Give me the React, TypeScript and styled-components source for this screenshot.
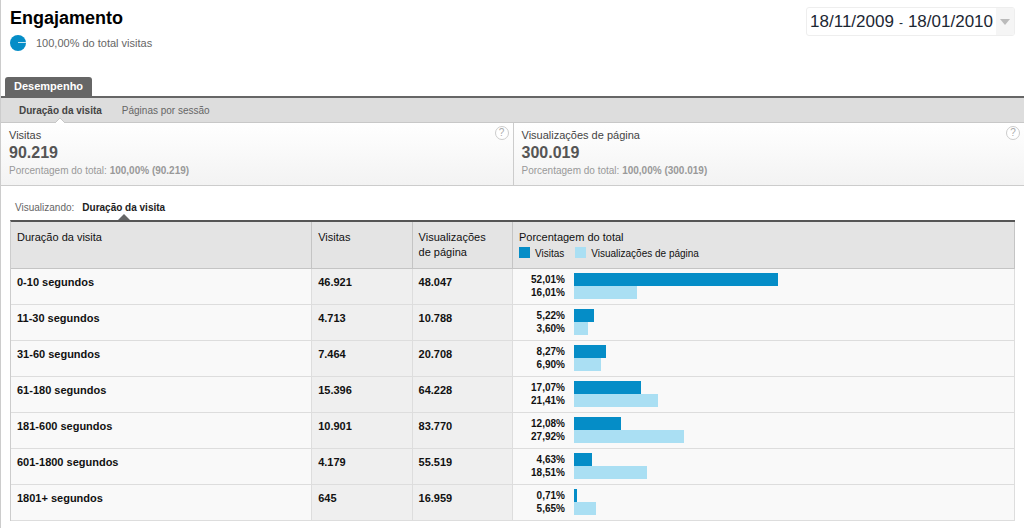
import React from "react";
import styled, { createGlobalStyle } from "styled-components";

const GlobalStyle = createGlobalStyle`
  *, *::before, *::after { box-sizing: border-box; }
  body { margin: 0; background: #fff; color: #111; font: 11px/14px "Liberation Sans", Arial, sans-serif; }
  h1, p, dl, dd { margin: 0; }
  button { font: inherit; color: inherit; cursor: pointer; }
  a { color: inherit; text-decoration: none; }
`;

const Page = styled.div`
  min-height: 100vh;
  border-left: 1px solid #ccc;
`;

const Header = styled.header`
  display: flex;
  justify-content: space-between;
  align-items: flex-start;
  padding: 7px 9px 25px;
`;

const Title = styled.h1`
  font-size: 18px;
  line-height: 22px;
  color: #000;
`;

const Share = styled.p`
  display: flex;
  align-items: center;
  gap: 10px;
  margin-top: 5px;
  line-height: 18px;
  color: #666;
`;

const DateButton = styled.button`
  display: flex;
  align-items: stretch;
  height: 29px;
  padding: 0;
  overflow: hidden;
  border: 1px solid #eee;
  border-radius: 3px;
  background: #fff;
  color: #1c2733;
  font-size: 17px;
  line-height: 27px;
`;

const DateRange = styled.span`
  display: flex;
  gap: 5px;
  padding: 0 3px;
`;

const Dash = styled.span`
  font-size: 12px;
  line-height: 30px;
`;

const Caret = styled.span`
  display: flex;
  align-items: center;
  justify-content: center;
  width: 18px;
  background: #f5f5f5;
`;

const TabBar = styled.nav`
  display: flex;
  padding-left: 4px;
  border-bottom: 2px solid #666;
`;

const Tab = styled.button`
  padding: 0 9px;
  border: 0;
  border-radius: 3px 3px 0 0;
  background: #666;
  color: #fff;
  font-weight: bold;
  line-height: 19px;
`;

const SubNav = styled.nav`
  display: flex;
  gap: 20px;
  padding: 1px 0 0 18px;
  border-bottom: 1px solid #c8c8c8;
  background: #ddd;
  font-size: 10px;
  line-height: 23px;
  color: #666;
`;

const SubLink = styled.a<{ $active?: boolean }>`
  position: relative;
  font-weight: ${(p) => (p.$active ? "bold" : "normal")};
  color: ${(p) => (p.$active ? "#444" : "#666")};
`;

const Notch = styled.svg`
  position: absolute;
  left: 50%;
  bottom: -1px;
  transform: translateX(-50%);
`;

const Metrics = styled.dl`
  display: grid;
  grid-template-columns: 1fr 1fr;
  border-bottom: 1px solid #ccc;
  background: linear-gradient(#fff, #f3f3f3);
`;

const Metric = styled.div`
  display: flex;
  justify-content: space-between;
  align-items: flex-start;
  padding: 3px 4px 6px 8px;

  & + & { border-left: 1px solid #ccc; }
`;

const MetricName = styled.dt`
  line-height: 18px;
  color: #444;
`;

const MetricValue = styled.dd`
  font-size: 16px;
  font-weight: bold;
  line-height: 18px;
  color: #555;
`;

const MetricShare = styled.dd`
  font-size: 10px;
  line-height: 17px;
  color: #999;
`;

const HelpButton = styled.button`
  width: 14px;
  height: 14px;
  padding: 0;
  border: 1px solid #ccc;
  border-radius: 50%;
  background: #fff;
  color: #aaa;
  font-size: 10px;
  line-height: 12px;
`;

const Viewing = styled.div`
  display: flex;
  gap: 8px;
  padding: 12px 14px 2px;
  font-size: 10px;
  line-height: 20px;
  color: #666;
`;

const ViewingLink = styled.a`
  position: relative;
  font-weight: bold;
  color: #222;
`;

const Pointer = styled.svg`
  position: absolute;
  left: 50%;
  bottom: -2px;
  transform: translateX(-50%);
`;

const TableArea = styled.div`
  padding: 0 9px 7px;
`;

const Table = styled.table`
  width: 100%;
  table-layout: fixed;
  border-collapse: separate;
  border-spacing: 0;
  border-top: 2px solid #555;
  border-left: 1px solid #ccc;
`;

const HeadCell = styled.th<{ $width: string }>`
  width: ${(p) => p.$width};
  height: 47px;
  padding: 8px 6px 4px;
  border-right: 1px solid #c4c4c4;
  border-bottom: 1px solid #c4c4c4;
  background: #e4e4e4;
  font-weight: normal;
  line-height: 15px;
  text-align: left;
  vertical-align: top;
`;

const Cell = styled.td<{ $shaded?: boolean }>`
  height: 36px;
  padding: 4px 7px 0 6px;
  border-right: 1px solid #ddd;
  border-bottom: 1px solid #ddd;
  background: ${(p) => (p.$shaded ? "#efefef" : "#f9f9f9")};
  font-weight: bold;
  line-height: 18px;
  text-align: left;
  vertical-align: top;
`;

const Legend = styled.div`
  display: flex;
  gap: 11px;
  font-size: 10px;
  line-height: 18px;
`;

const LegendItem = styled.span`
  display: flex;
  gap: 5px;
`;

const Swatch = styled.span<{ $color: string }>`
  width: 11px;
  height: 11px;
  margin-top: 2px;
  background: ${(p) => p.$color};
`;

const BarRow = styled.div`
  display: grid;
  grid-template-columns: 46px 1fr;
  gap: 9px;
  padding-right: 40px;
  font-size: 10px;
  line-height: 13px;
  text-align: right;
`;

const Bar = styled.div<{ $color: string }>`
  background: ${(p) => p.$color};
`;

const DARK = "#058dc7";
const LIGHT = "#aadff3";

const rows = [
  { label: "0-10 segundos", visits: "46.921", views: "48.047", shares: [52.01, 16.01] },
  { label: "11-30 segundos", visits: "4.713", views: "10.788", shares: [5.22, 3.6] },
  { label: "31-60 segundos", visits: "7.464", views: "20.708", shares: [8.27, 6.9] },
  { label: "61-180 segundos", visits: "15.396", views: "64.228", shares: [17.07, 21.41] },
  { label: "181-600 segundos", visits: "10.901", views: "83.770", shares: [12.08, 27.92] },
  { label: "601-1800 segundos", visits: "4.179", views: "55.519", shares: [4.63, 18.51] },
  { label: "1801+ segundos", visits: "645", views: "16.959", shares: [0.71, 5.65] },
];

const metrics = [
  { name: "Visitas", value: "90.219" },
  { name: "Visualizações de página", value: "300.019" },
];

const percent = (n: number) => n.toFixed(2).replace(".", ",") + "%";

export default function App() {
  return (
    <Page>
      <GlobalStyle />
      <Header>
        <div>
          <Title>Engajamento</Title>
          <Share>
            <svg width="16" height="16" viewBox="0 0 16 16" aria-hidden="true">
              <circle cx="8" cy="8" r="8" fill={DARK} />
              <path d="M8 7.5H16" stroke="#c4e6f3" strokeWidth="1" />
            </svg>
            100,00% do total visitas
          </Share>
        </div>
        <DateButton type="button">
          <DateRange>
            <span>18/11/2009</span>
            <Dash>-</Dash>
            <span>18/01/2010</span>
          </DateRange>
          <Caret>
            <svg width="10" height="6" viewBox="0 0 10 6" aria-hidden="true">
              <path d="M0 0H10L5 6Z" fill="#bbb" />
            </svg>
          </Caret>
        </DateButton>
      </Header>

      <TabBar>
        <Tab type="button">Desempenho</Tab>
      </TabBar>
      <SubNav>
        <SubLink href="#duracao" $active>
          Duração da visita
          <Notch width="10" height="5" viewBox="0 0 10 5" aria-hidden="true">
            <path d="M0 5L5 0L10 5Z" fill="#fff" />
            <path d="M0 5L5 0L10 5" fill="none" stroke="#c8c8c8" />
          </Notch>
        </SubLink>
        <SubLink href="#paginas">Páginas por sessão</SubLink>
      </SubNav>

      <Metrics>
        {metrics.map((m) => (
          <Metric key={m.name}>
            <div>
              <MetricName>{m.name}</MetricName>
              <MetricValue>{m.value}</MetricValue>
              <MetricShare>
                Porcentagem do total: <b>100,00% ({m.value})</b>
              </MetricShare>
            </div>
            <HelpButton type="button">?</HelpButton>
          </Metric>
        ))}
      </Metrics>

      <Viewing>
        <span>Visualizando:</span>
        <ViewingLink href="#duracao">
          Duração da visita
          <Pointer width="12" height="6" viewBox="0 0 12 6" aria-hidden="true">
            <path d="M0 6L6 0L12 6Z" fill="#666" />
          </Pointer>
        </ViewingLink>
      </Viewing>

      <TableArea>
        <Table>
          <thead>
            <tr>
              <HeadCell $width="30%">Duração da visita</HeadCell>
              <HeadCell $width="10%">Visitas</HeadCell>
              <HeadCell $width="10%">
                Visualizações
                <br />
                de página
              </HeadCell>
              <HeadCell $width="50%">
                Porcentagem do total
                <Legend>
                  <LegendItem>
                    <Swatch $color={DARK} />
                    Visitas
                  </LegendItem>
                  <LegendItem>
                    <Swatch $color={LIGHT} />
                    Visualizações de página
                  </LegendItem>
                </Legend>
              </HeadCell>
            </tr>
          </thead>
          <tbody>
            {rows.map((r) => (
              <tr key={r.label}>
                <Cell as="th" scope="row">{r.label}</Cell>
                <Cell $shaded>{r.visits}</Cell>
                <Cell $shaded>{r.views}</Cell>
                <Cell>
                  {r.shares.map((s, i) => (
                    <BarRow key={i}>
                      <span>{percent(s)}</span>
                      <Bar $color={i === 0 ? DARK : LIGHT} style={{ width: `${s}%` }} />
                    </BarRow>
                  ))}
                </Cell>
              </tr>
            ))}
          </tbody>
        </Table>
      </TableArea>
    </Page>
  );
}
